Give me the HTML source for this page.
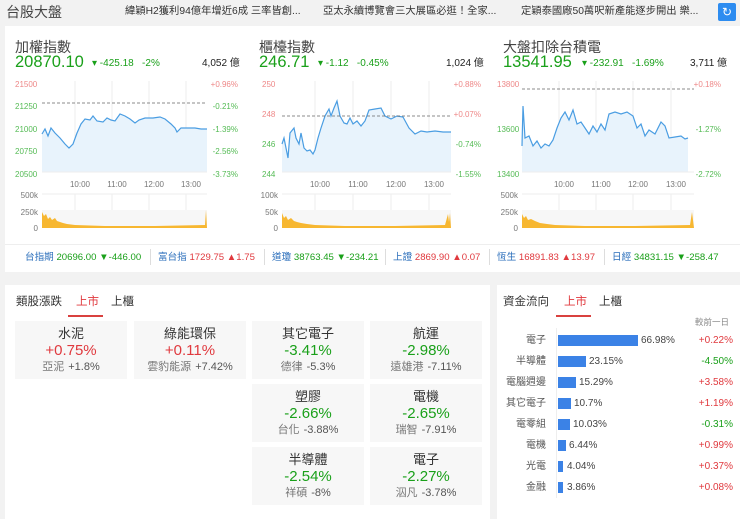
<!DOCTYPE html>
<html><head><meta charset="utf-8"><style>
*{margin:0;padding:0;box-sizing:border-box}
body{width:740px;height:519px;background:#f2f2f2;font-family:"Liberation Sans","Noto Sans CJK TC",sans-serif;position:relative;overflow:hidden;color:#333;line-height:1.2}
.a{position:absolute;white-space:nowrap}
.g{color:#1aa01a}.r{color:#e0393e}
.panel{position:absolute;background:#fff}
.card{position:absolute;width:112px;height:58px;background:#f7f7f7;text-align:center}
.card .t{font-size:13px;color:#333;margin-top:5px;line-height:16px}
.card .p{font-size:15px;line-height:18px}
.card .s{font-size:11px;color:#777;line-height:15px}
.card .s b{font-weight:normal;color:#555;margin-left:4px}
.row{position:absolute;left:0;width:243px;height:21px;font-size:10px}
.tk{font-size:9.6px;color:#2a6ebb;top:252px}
.h1{font-size:14px;color:#444;line-height:16px;top:39px}
.h2{font-size:16.5px;line-height:18px;top:53px}
.h3{font-size:10px;line-height:12px;top:58px}
</style></head><body>
<div class="a" style="left:6px;top:4px;font-size:14px;color:#444">台股大盤</div>
<div class="a" style="left:125px;top:6px;font-size:10.3px;color:#333">緯穎H2獲利94億年增近6成 三率皆創...</div>
<div class="a" style="left:323px;top:6px;font-size:10.3px;color:#333">亞太永續博覽會三大展區必逛！全家...</div>
<div class="a" style="left:521px;top:6px;font-size:10.3px;color:#333">定穎泰國廠50萬呎新產能逐步開出 樂...</div>
<div class="a" style="left:718px;top:3px;width:18px;height:18px;background:#2d8cf0;border-radius:2px;color:#fff;font-size:12px;text-align:center;line-height:18px">↻</div>

<div class="panel" style="left:5px;top:26px;width:735px;height:246px"></div>
<div class="a" style="left:5px;top:244px;width:735px;height:1px;background:#eee"></div>

<!-- headers -->
<div class="a h1" style="left:15px">加權指數</div>
<div class="a g h2" style="left:15px">20870.10</div>
<div class="a g h3" style="left:92px">▾ -425.18 &nbsp;&nbsp;-2%</div>
<div class="a h3" style="left:202px;color:#222">4,052 億</div>
<div class="a h1" style="left:259px">櫃檯指數</div>
<div class="a g h2" style="left:259px">246.71</div>
<div class="a g h3" style="left:318px">▾ -1.12 &nbsp;&nbsp;-0.45%</div>
<div class="a h3" style="left:446px;color:#222">1,024 億</div>
<div class="a h1" style="left:503px">大盤扣除台積電</div>
<div class="a g h2" style="left:503px">13541.95</div>
<div class="a g h3" style="left:582px">▾ -232.91 &nbsp;&nbsp;-1.69%</div>
<div class="a h3" style="left:690px;color:#222">3,711 億</div>

<!-- chart svgs -->
<svg class="a" style="left:5px;top:76px" width="240" height="156" font-family="Liberation Sans" font-size="8">
<g stroke="#eee"><line x1="70" y1="5" x2="70" y2="96"/><line x1="107" y1="5" x2="107" y2="96"/><line x1="144" y1="5" x2="144" y2="96"/><line x1="181" y1="5" x2="181" y2="96"/><line x1="70" y1="118" x2="70" y2="152"/><line x1="107" y1="118" x2="107" y2="152"/><line x1="144" y1="118" x2="144" y2="152"/><line x1="181" y1="118" x2="181" y2="152"/><line x1="37" y1="118" x2="202" y2="118"/></g>
<rect x="37" y="134" width="165" height="17" fill="#f7f7f7"/>
<path d="M37,58 L40,53 43,60 46,52 50,57 55,62 60,68 64,72 68,68 72,57 76,48 80,43 85,44 88,40 92,45 98,46 102,42 106,44 110,45 115,38 120,40 125,43 130,47 134,44 140,42 148,42 155,41 160,43 166,48 170,52 172,56 176,52 182,52 190,52 196,53 202,53 L202,96 37,96Z" fill="#e8f3fc"/>
<path d="M37,58 L40,53 43,60 46,52 50,57 55,62 60,68 64,72 68,68 72,57 76,48 80,43 85,44 88,40 92,45 98,46 102,42 106,44 110,45 115,38 120,40 125,43 130,47 134,44 140,42 148,42 155,41 160,43 166,48 170,52 172,56 176,52 182,52 190,52 196,53 202,53" fill="none" stroke="#4a9de2" stroke-width="1.2"/>
<line x1="37" y1="27" x2="202" y2="27" stroke="#666" stroke-dasharray="3,2" stroke-width="0.8"/>
<line x1="37" y1="96" x2="202" y2="96" stroke="#eee"/>
<g fill="#e88"><text x="10" y="11">21500</text><text x="233" y="11" text-anchor="end">+0.96%</text></g>
<g fill="#5b5"><text x="10" y="33">21250</text><text x="10" y="56">21000</text><text x="10" y="78">20750</text><text x="10" y="101">20500</text><text x="233" y="33" text-anchor="end">-0.21%</text><text x="233" y="56" text-anchor="end">-1.39%</text><text x="233" y="78" text-anchor="end">-2.56%</text><text x="233" y="101" text-anchor="end">-3.73%</text></g>
<g fill="#777" text-anchor="middle"><text x="75" y="111">10:00</text><text x="112" y="111">11:00</text><text x="149" y="111">12:00</text><text x="186" y="111">13:00</text></g>
<g fill="#777" text-anchor="end"><text x="33" y="122">500k</text><text x="33" y="139">250k</text><text x="33" y="155">0</text></g>
<path d="M37,152 L37,136 39,140 41,138 43,143 45,141 47,144 50,142 52,145 55,146 58,147 62,148 70,149 100,150 150,150 200,149 201,134 202,152Z" fill="#f7b731"/>
</svg>

<svg class="a" style="left:245px;top:76px" width="240" height="156" font-family="Liberation Sans" font-size="8">
<g stroke="#eee"><line x1="70" y1="5" x2="70" y2="96"/><line x1="108" y1="5" x2="108" y2="96"/><line x1="146" y1="5" x2="146" y2="96"/><line x1="184" y1="5" x2="184" y2="96"/><line x1="70" y1="118" x2="70" y2="152"/><line x1="108" y1="118" x2="108" y2="152"/><line x1="146" y1="118" x2="146" y2="152"/><line x1="184" y1="118" x2="184" y2="152"/><line x1="37" y1="118" x2="206" y2="118"/></g>
<rect x="37" y="134" width="169" height="17" fill="#f7f7f7"/>
<path d="M37,68 L39,62 41,72 43,82 45,57 49,52 51,62 54,68 56,57 59,72 62,75 65,74 68,78 70,74 73,62 76,52 80,40 84,33 86,40 89,32 92,25 95,40 99,47 102,48 105,42 108,48 112,45 116,50 120,45 124,34 130,33 136,32 140,40 146,43 152,40 158,41 164,52 170,58 176,55 182,56 190,55 198,56 206,56 L206,96 37,96Z" fill="#e8f3fc"/>
<path d="M37,68 L39,62 41,72 43,82 45,57 49,52 51,62 54,68 56,57 59,72 62,75 65,74 68,78 70,74 73,62 76,52 80,40 84,33 86,40 89,32 92,25 95,40 99,47 102,48 105,42 108,48 112,45 116,50 120,45 124,34 130,33 136,32 140,40 146,43 152,40 158,41 164,52 170,58 176,55 182,56 190,55 198,56 206,56" fill="none" stroke="#4a9de2" stroke-width="1.2"/>
<line x1="37" y1="40" x2="206" y2="40" stroke="#666" stroke-dasharray="3,2" stroke-width="0.8"/>
<line x1="37" y1="96" x2="206" y2="96" stroke="#eee"/>
<g fill="#e88"><text x="17" y="11">250</text><text x="17" y="41">248</text><text x="236" y="11" text-anchor="end">+0.88%</text><text x="236" y="41" text-anchor="end">+0.07%</text></g>
<g fill="#5b5"><text x="17" y="71">246</text><text x="17" y="101">244</text><text x="236" y="71" text-anchor="end">-0.74%</text><text x="236" y="101" text-anchor="end">-1.55%</text></g>
<g fill="#777" text-anchor="middle"><text x="75" y="111">10:00</text><text x="113" y="111">11:00</text><text x="151" y="111">12:00</text><text x="189" y="111">13:00</text></g>
<g fill="#777" text-anchor="end"><text x="33" y="122">100k</text><text x="33" y="139">50k</text><text x="33" y="155">0</text></g>
<path d="M37,152 L37,137 39,142 41,140 43,144 46,142 49,145 52,146 56,147 62,148 70,149 100,150 150,150 200,149 203,138 204,146 205,137 206,152Z" fill="#f7b731"/>
</svg>

<svg class="a" style="left:485px;top:76px" width="240" height="156" font-family="Liberation Sans" font-size="8">
<g stroke="#eee"><line x1="74" y1="5" x2="74" y2="96"/><line x1="111" y1="5" x2="111" y2="96"/><line x1="148" y1="5" x2="148" y2="96"/><line x1="186" y1="5" x2="186" y2="96"/><line x1="74" y1="118" x2="74" y2="152"/><line x1="111" y1="118" x2="111" y2="152"/><line x1="148" y1="118" x2="148" y2="152"/><line x1="186" y1="118" x2="186" y2="152"/><line x1="37" y1="118" x2="209" y2="118"/></g>
<rect x="37" y="134" width="172" height="17" fill="#f7f7f7"/>
<path d="M37,70 L38,30 40,62 44,60 48,70 52,65 56,72 60,68 64,70 68,64 72,52 76,42 80,36 84,44 88,34 92,48 96,46 100,52 104,58 108,50 112,56 116,48 120,54 124,38 130,36 136,38 142,36 148,40 152,52 156,48 160,60 164,54 170,58 176,46 180,50 184,62 190,61 196,60 200,63 203,62 L203,96 37,96Z" fill="#e8f3fc"/>
<path d="M37,70 L38,30 40,62 44,60 48,70 52,65 56,72 60,68 64,70 68,64 72,52 76,42 80,36 84,44 88,34 92,48 96,46 100,52 104,58 108,50 112,56 116,48 120,54 124,38 130,36 136,38 142,36 148,40 152,52 156,48 160,60 164,54 170,58 176,46 180,50 184,62 190,61 196,60 200,63 203,62" fill="none" stroke="#4a9de2" stroke-width="1.2"/>
<line x1="37" y1="13" x2="209" y2="13" stroke="#666" stroke-dasharray="3,2" stroke-width="0.8"/>
<line x1="37" y1="96" x2="209" y2="96" stroke="#eee"/>
<g fill="#e88"><text x="12" y="11">13800</text><text x="236" y="11" text-anchor="end">+0.18%</text></g>
<g fill="#5b5"><text x="12" y="56">13600</text><text x="12" y="101">13400</text><text x="236" y="56" text-anchor="end">-1.27%</text><text x="236" y="101" text-anchor="end">-2.72%</text></g>
<g fill="#777" text-anchor="middle"><text x="79" y="111">10:00</text><text x="116" y="111">11:00</text><text x="153" y="111">12:00</text><text x="191" y="111">13:00</text></g>
<g fill="#777" text-anchor="end"><text x="33" y="122">500k</text><text x="33" y="139">250k</text><text x="33" y="155">0</text></g>
<path d="M37,152 L37,138 39,142 41,140 43,144 46,143 50,145 55,147 62,148 70,149 100,150 150,150 205,149 207,136 209,152Z" fill="#f7b731"/>
</svg>

<!-- ticker -->
<div class="a tk" style="left:25px">台指期 <span class="g">20696.00 ▼-446.00</span></div>
<div class="a" style="left:150px;top:249px;width:1px;height:16px;background:#ddd"></div>
<div class="a tk" style="left:158px">富台指 <span class="r">1729.75 ▲1.75</span></div>
<div class="a" style="left:264px;top:249px;width:1px;height:16px;background:#ddd"></div>
<div class="a tk" style="left:272px">道瓊 <span class="g">38763.45 ▼-234.21</span></div>
<div class="a" style="left:385px;top:249px;width:1px;height:16px;background:#ddd"></div>
<div class="a tk" style="left:393px">上證 <span class="r">2869.90 ▲0.07</span></div>
<div class="a" style="left:489px;top:249px;width:1px;height:16px;background:#ddd"></div>
<div class="a tk" style="left:497px">恆生 <span class="r">16891.83 ▲13.97</span></div>
<div class="a" style="left:604px;top:249px;width:1px;height:16px;background:#ddd"></div>
<div class="a tk" style="left:612px">日經 <span class="g">34831.15 ▼-258.47</span></div>

<!-- bottom left -->
<div class="panel" style="left:5px;top:285px;width:485px;height:234px"></div>
<div class="a" style="left:16px;top:296px;font-size:11.5px;color:#333">類股漲跌</div>
<div class="a r" style="left:76px;top:296px;font-size:11.5px">上市</div>
<div class="a" style="left:68px;top:315px;width:35px;height:2px;background:#d9413f"></div>
<div class="a" style="left:111px;top:296px;font-size:11.5px;color:#333">上櫃</div>
<div class="card" style="left:15px;top:321px"><div class="t">水泥</div><div class="p r">+0.75%</div><div class="s">亞泥<b>+1.8%</b></div></div>
<div class="card" style="left:134px;top:321px"><div class="t">綠能環保</div><div class="p r">+0.11%</div><div class="s">雲豹能源<b>+7.42%</b></div></div>
<div class="card" style="left:252px;top:321px"><div class="t">其它電子</div><div class="p g">-3.41%</div><div class="s">德律<b>-5.3%</b></div></div>
<div class="card" style="left:370px;top:321px"><div class="t">航運</div><div class="p g">-2.98%</div><div class="s">遠雄港<b>-7.11%</b></div></div>
<div class="card" style="left:252px;top:384px"><div class="t">塑膠</div><div class="p g">-2.66%</div><div class="s">台化<b>-3.88%</b></div></div>
<div class="card" style="left:370px;top:384px"><div class="t">電機</div><div class="p g">-2.65%</div><div class="s">瑞智<b>-7.91%</b></div></div>
<div class="card" style="left:252px;top:447px"><div class="t">半導體</div><div class="p g">-2.54%</div><div class="s">祥碩<b>-8%</b></div></div>
<div class="card" style="left:370px;top:447px"><div class="t">電子</div><div class="p g">-2.27%</div><div class="s">泅凡<b>-3.78%</b></div></div>

<!-- bottom right -->
<div class="panel" style="left:497px;top:285px;width:243px;height:234px"></div>
<div class="a" style="left:503px;top:296px;font-size:11.5px;color:#333">資金流向</div>
<div class="a r" style="left:564px;top:296px;font-size:11.5px">上市</div>
<div class="a" style="left:556px;top:315px;width:35px;height:2px;background:#d9413f"></div>
<div class="a" style="left:599px;top:296px;font-size:11.5px;color:#333">上櫃</div>
<div class="a" style="left:695px;top:317px;font-size:8.5px;color:#888">較前一日</div>
<div class="a" style="left:556px;top:328px;width:1px;height:170px;background:#eee"></div>
<div style="position:absolute;left:497px;top:330px;width:243px;height:180px;font-size:10px">
<div class="row" style="top:0"><span class="a" style="right:194px;top:5px;color:#555">電子</span><span class="a" style="left:61px;top:5px;width:80px;height:11px;background:#3b82e6"></span><span class="a" style="left:144px;top:5px;color:#444">66.98%</span><span class="a r" style="right:7px;top:5px">+0.22%</span></div>
<div class="row" style="top:21px"><span class="a" style="right:194px;top:5px;color:#555">半導體</span><span class="a" style="left:61px;top:5px;width:28px;height:11px;background:#3b82e6"></span><span class="a" style="left:92px;top:5px;color:#444">23.15%</span><span class="a g" style="right:7px;top:5px">-4.50%</span></div>
<div class="row" style="top:42px"><span class="a" style="right:194px;top:5px;color:#555">電腦週邊</span><span class="a" style="left:61px;top:5px;width:18px;height:11px;background:#3b82e6"></span><span class="a" style="left:82px;top:5px;color:#444">15.29%</span><span class="a r" style="right:7px;top:5px">+3.58%</span></div>
<div class="row" style="top:63px"><span class="a" style="right:194px;top:5px;color:#555">其它電子</span><span class="a" style="left:61px;top:5px;width:13px;height:11px;background:#3b82e6"></span><span class="a" style="left:77px;top:5px;color:#444">10.7%</span><span class="a r" style="right:7px;top:5px">+1.19%</span></div>
<div class="row" style="top:84px"><span class="a" style="right:194px;top:5px;color:#555">電零組</span><span class="a" style="left:61px;top:5px;width:12px;height:11px;background:#3b82e6"></span><span class="a" style="left:76px;top:5px;color:#444">10.03%</span><span class="a g" style="right:7px;top:5px">-0.31%</span></div>
<div class="row" style="top:105px"><span class="a" style="right:194px;top:5px;color:#555">電機</span><span class="a" style="left:61px;top:5px;width:8px;height:11px;background:#3b82e6"></span><span class="a" style="left:72px;top:5px;color:#444">6.44%</span><span class="a r" style="right:7px;top:5px">+0.99%</span></div>
<div class="row" style="top:126px"><span class="a" style="right:194px;top:5px;color:#555">光電</span><span class="a" style="left:61px;top:5px;width:5px;height:11px;background:#3b82e6"></span><span class="a" style="left:70px;top:5px;color:#444">4.04%</span><span class="a r" style="right:7px;top:5px">+0.37%</span></div>
<div class="row" style="top:147px"><span class="a" style="right:194px;top:5px;color:#555">金融</span><span class="a" style="left:61px;top:5px;width:5px;height:11px;background:#3b82e6"></span><span class="a" style="left:70px;top:5px;color:#444">3.86%</span><span class="a r" style="right:7px;top:5px">+0.08%</span></div>
</div>
</body></html>
